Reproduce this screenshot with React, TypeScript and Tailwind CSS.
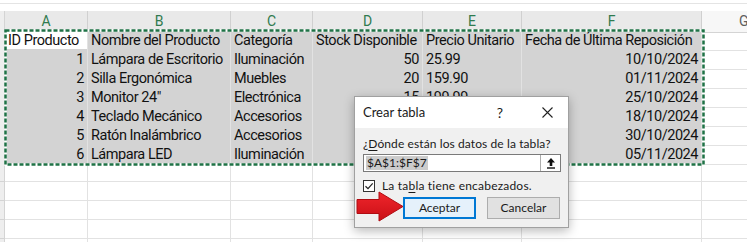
import React from 'react';

const cellFont = { fontFamily: 'Roboto, "Liberation Sans", sans-serif' };
const uiFont = { fontFamily: 'Lato, "Noto Sans", sans-serif' };

const headers = ['ID Producto', 'Nombre del Producto', 'Categoría', 'Stock Disponible', 'Precio Unitario', 'Fecha de Última Reposición'];

const rows: string[][] = [
  ['1', 'Lámpara de Escritorio', 'Iluminación', '50', '25.99', '10/10/2024'],
  ['2', 'Silla Ergonómica', 'Muebles', '20', '159.90', '01/11/2024'],
  ['3', 'Monitor 24"', 'Electrónica', '15', '199.99', '25/10/2024'],
  ['4', 'Teclado Mecánico', 'Accesorios', '30', '89.50', '18/10/2024'],
  ['5', 'Ratón Inalámbrico', 'Accesorios', '40', '45.00', '30/10/2024'],
  ['6', 'Lámpara LED', 'Iluminación', '25', '35.75', '05/11/2024'],
];

// which columns are right aligned (numbers / dates)
const rightCols = [true, false, false, true, false, true];

const letters = ['A', 'B', 'C', 'D', 'E', 'F'];

const RedArrow = () => (
  <svg width="48" height="31" viewBox="0 0 48 31" className="absolute left-[356px] top-[191px]">
    <defs>
      <linearGradient id="ar" x1="0" y1="0" x2="0" y2="1">
        <stop offset="0" stopColor="#f0262c" />
        <stop offset="1" stopColor="#c90f16" />
      </linearGradient>
    </defs>
    <path d="M1 8.5 H23 V1 L47 15.5 L23 30 V22.5 H1 Z" fill="url(#ar)" stroke="#b00c12" strokeWidth="1" strokeLinejoin="round" />
  </svg>
);

const Selection = () => (
  <svg width="701" height="137" className="absolute left-[4px] top-[29px] pointer-events-none">
    <rect x="1.5" y="1.5" width="698" height="134" fill="none" stroke="#ffffff" strokeWidth="2.5" />
    <rect x="1.5" y="1.5" width="698" height="134" fill="none" stroke="#1f7246" strokeWidth="2.5" strokeDasharray="4 2" />
  </svg>
);

const Dialog = () => (
  <div
    className="absolute left-[354px] top-[96px] w-[215px] h-[132px] bg-[#f0f0f0] border border-[#a0a0a0] shadow-[0_3px_10px_rgba(0,0,0,0.28)] flex flex-col text-[#1a1a1a]"
    style={uiFont}
  >
    <div className="h-[31px] bg-white flex items-center pl-[8px] pr-[15px]">
      <span className="text-[13px]">Crear tabla</span>
      <span className="ml-auto text-[14px] mr-[39px]">?</span>
      <svg width="11" height="11" viewBox="0 0 11 11">
        <path d="M0.5 0.5 L10.5 10.5 M10.5 0.5 L0.5 10.5" stroke="#222" strokeWidth="1.1" />
      </svg>
    </div>
    <div className="flex flex-col px-[8px] pt-[8px]">
      <div className="text-[12px] leading-[16px] whitespace-nowrap tracking-[0.1px]">
        ¿<span className="underline underline-offset-2">D</span>ónde están los datos de la tabla?
      </div>
      <div className="mt-[2px] h-[18px] w-[198px] bg-white border border-[#7a7a7a] flex items-center">
        <span className="ml-[2px] bg-[#cccccc] text-[12px] leading-[14px] px-px">$A$1:$F$7</span>
        <div className="ml-auto h-full w-[20px] border-l border-[#adadad] flex items-center justify-center">
          <svg width="10" height="12" viewBox="0 0 10 12">
            <path d="M5 1 L9 5.5 H6.3 V9 H3.7 V5.5 H1 Z" fill="#111" />
            <rect x="1" y="10.3" width="8" height="1.4" fill="#111" />
          </svg>
        </div>
      </div>
      <div className="mt-[7px] flex items-center h-[14px]">
        <div className="w-[12px] h-[12px] border border-[#333] bg-white flex items-center justify-center">
          <svg width="10" height="10" viewBox="0 0 10 10">
            <path d="M1.5 5.2 L4 7.6 L8.7 2.3" fill="none" stroke="#222" strokeWidth="1.2" />
          </svg>
        </div>
        <span className="ml-[7px] text-[12px] leading-[14px] tracking-[0.2px]">
          La ta<span className="underline underline-offset-2">b</span>la tiene encabezados.
        </span>
      </div>
      <div className="mt-[4px] flex justify-end gap-[11px]">
        <div className="w-[73px] h-[22px] bg-[#e5f1fb] border-2 border-[#0078d4] flex items-center justify-center text-[12px]">
          Aceptar
        </div>
        <div className="w-[73px] h-[22px] bg-[#e1e1e1] border border-[#adadad] flex items-center justify-center text-[12px]">
          Cancelar
        </div>
      </div>
    </div>
  </div>
);

export default function App() {
  const colClass = 'grid grid-cols-[5px_83px_143px_82px_110px_99px_180px_1fr]';
  const emptyRows = 5;

  return (
    <div className="relative w-[747px] h-[242px] overflow-hidden bg-white" style={cellFont}>
      {/* formula bar edge */}
      <div className="h-[11px] bg-white border-t border-[#e4e4e4] mt-[3px] -mb-[3px]" />

      {/* column headers */}
      <div className={`${colClass} h-[19px] text-[14px] leading-[20px]`}>
        <div className="bg-[#eeeeee] border-r border-b border-[#d4d4d4]" />
        {letters.map((l) => (
          <div
            key={l}
            className="bg-[#e9e9e9] border-r border-[#d0d0d0] border-b-2 border-b-[#1f7246] text-center text-[#2f7a4e]"
          >
            {l}
          </div>
        ))}
        <div className="bg-[#f7f7f7] border-b border-[#d4d4d4] pl-[37px] text-[#5f5f5f]">G</div>
      </div>

      {/* header row */}
      <div className={`${colClass} h-[19px] text-[14.5px] leading-[19px] tracking-[-0.45px] text-[#111]`}>
        <div className="bg-[#eeeeee] border-r border-b border-[#d4d4d4]" />
        {headers.map((h, i) => (
          <div
            key={h}
            className={`${i === 0 ? 'bg-white' : 'bg-[#d3d3d3]'} border-r border-b border-[#e2e2e2] pl-[3px] pt-px whitespace-nowrap overflow-x-clip`}
          >
            {h}
          </div>
        ))}
        <div className="border-b border-[#e2e2e2]" />
      </div>

      {/* data rows */}
      {rows.map((r, ri) => (
        <div key={ri} className={`${colClass} h-[19px] text-[14.5px] leading-[19px] tracking-[-0.45px] text-[#111]`}>
          <div className="bg-[#eeeeee] border-r border-b border-[#d4d4d4]" />
          {r.map((c, ci) => (
            <div
              key={ci}
              className={`bg-[#d3d3d3] border-r border-b border-[#e2e2e2] pt-px whitespace-nowrap overflow-x-clip ${
                rightCols[ci] ? 'text-right pr-[3px]' : 'pl-[3px]'
              }`}
            >
              {c}
            </div>
          ))}
          <div className="border-b border-[#e2e2e2]" />
        </div>
      ))}

      {/* empty rows */}
      {Array.from({ length: emptyRows }).map((_, i) => (
        <div key={i} className={`${colClass} h-[19px]`}>
          <div className="bg-[#eeeeee] border-r border-b border-[#d4d4d4]" />
          {letters.map((l) => (
            <div key={l} className="border-r border-b border-[#e2e2e2]" />
          ))}
          <div className="border-b border-[#e2e2e2]" />
        </div>
      ))}

      <Selection />
      <Dialog />
      <RedArrow />
    </div>
  );
}
